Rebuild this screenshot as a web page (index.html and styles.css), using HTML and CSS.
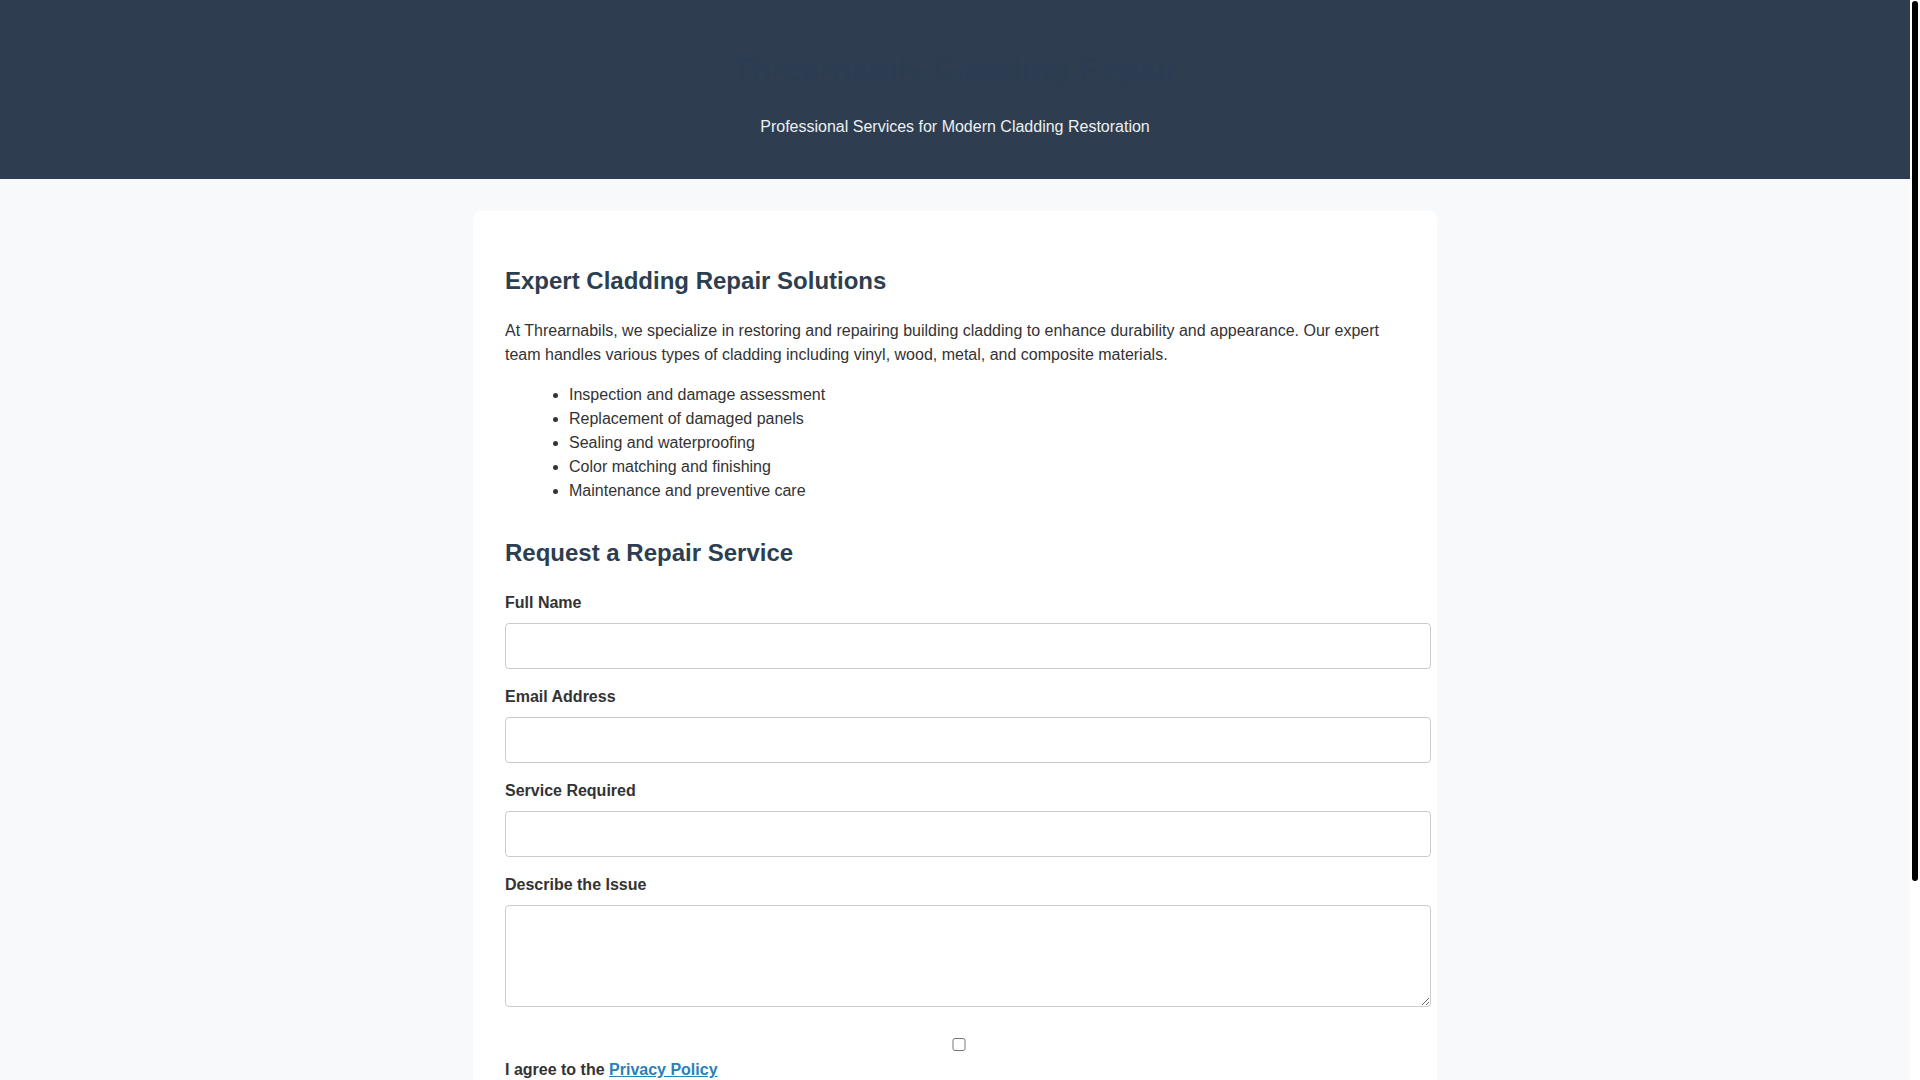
FILE: index.html
```html
<!DOCTYPE html>
<html lang="en">
<head>
<meta charset="UTF-8">
<title>Threarnabils Cladding Repair</title>
<link rel="stylesheet" href="styles.css">
</head>
<body>
<header class="site-header">
  <h1 class="site-title">Threarnabils Cladding Repair</h1>
  <p class="site-tagline">Professional Services for Modern Cladding Restoration</p>
</header>
<main class="card">
  <section class="intro">
    <h2 class="section-title">Expert Cladding Repair Solutions</h2>
    <p>At Threarnabils, we specialize in restoring and repairing building cladding to enhance durability and appearance. Our expert team handles various types of cladding including vinyl, wood, metal, and composite materials.</p>
    <ul class="service-list">
      <li>Inspection and damage assessment</li>
      <li>Replacement of damaged panels</li>
      <li>Sealing and waterproofing</li>
      <li>Color matching and finishing</li>
      <li>Maintenance and preventive care</li>
    </ul>
  </section>
  <section class="request">
    <h2 class="section-title">Request a Repair Service</h2>
    <form class="request-form">
      <div class="form-group">
        <label class="field-label" for="name">Full Name</label>
        <input class="field field-text" type="text" id="name">
      </div>
      <div class="form-group">
        <label class="field-label" for="email">Email Address</label>
        <input class="field field-text" type="email" id="email">
      </div>
      <div class="form-group">
        <label class="field-label" for="service">Service Required</label>
        <input class="field field-text" type="text" id="service">
      </div>
      <div class="form-group">
        <label class="field-label" for="issue">Describe the Issue</label>
        <textarea class="field field-area" id="issue" rows="4"></textarea>
      </div>
      <div class="form-group check-group">
        <input class="field" type="checkbox" id="agree">
        <label class="field-label" for="agree">I agree to the <a class="policy-link" href="#">Privacy Policy</a></label>
      </div>
      <button class="submit-btn" type="button">Submit Request</button>
    </form>
  </section>
</main>
<footer class="site-footer">
  <p>&copy; 2024 Threarnabils Cladding Repair. All rights reserved.</p>
</footer>
<div class="fake-scrollbar" aria-hidden="true"><div class="fake-thumb"></div></div>
</body>
</html>
```

FILE: styles.css
```css
html, body {
  margin: 0;
  padding: 0;
}

body {
  font-family: "Liberation Sans", Arial, sans-serif;
  font-size: 16px;
  line-height: 1.5;
  color: #333333;
  background: #f8f9fa;
  padding-right: 10px;
}

.fake-scrollbar {
  position: fixed;
  top: 0;
  right: 0;
  width: 10px;
  height: 100vh;
  background: #ffffff;
}

.fake-thumb {
  margin: 1px 2px 0 2px;
  height: 880px;
  background: #000000;
  border-radius: 3px;
}

.site-header {
  background: #2e3e50;
  padding: 24px 0;
  text-align: center;
}

.site-title {
  font-size: 32px;
  margin: 21.44px 0;
  color: #2c3d53;
}

.site-tagline {
  margin: 16px 0;
  color: #ecf0f1;
}

.card {
  display: block;
  max-width: 900px;
  margin: 32px auto;
  padding: 32px;
  background: #ffffff;
  border-radius: 8px;
}

.section-title {
  font-size: 24px;
  margin: 19.92px 0;
  color: #2c3e50;
}

.intro p {
  margin: 16px 0;
}

.service-list {
  margin: 16px 0;
  padding-left: 64px;
}

.request {
  margin-top: 32px;
}

.form-group {
  margin-bottom: 16px;
}

.check-group {
  padding-top: 11px;
}

.field-label {
  display: block;
  font-weight: bold;
  margin-bottom: 8px;
}

.field {
  width: 100%;
  padding: 12px;
  border: 1px solid #cccccc;
  border-radius: 4px;
  font-family: "Liberation Sans", Arial, sans-serif;
  font-size: 16px;
}

.field-text {
  height: 20px;
}

.field-area {
  display: block;
  height: 76px;
}

.policy-link {
  color: #2a80b9;
}

.submit-btn {
  background: #2c3e50;
  color: #ffffff;
  border: none;
  border-radius: 4px;
  padding: 12px 24px;
  font-family: "Liberation Sans", Arial, sans-serif;
  font-size: 16px;
}

.site-footer {
  text-align: center;
  padding: 16px 0;
  color: #666666;
}

.site-footer p {
  margin: 0;
}
```
